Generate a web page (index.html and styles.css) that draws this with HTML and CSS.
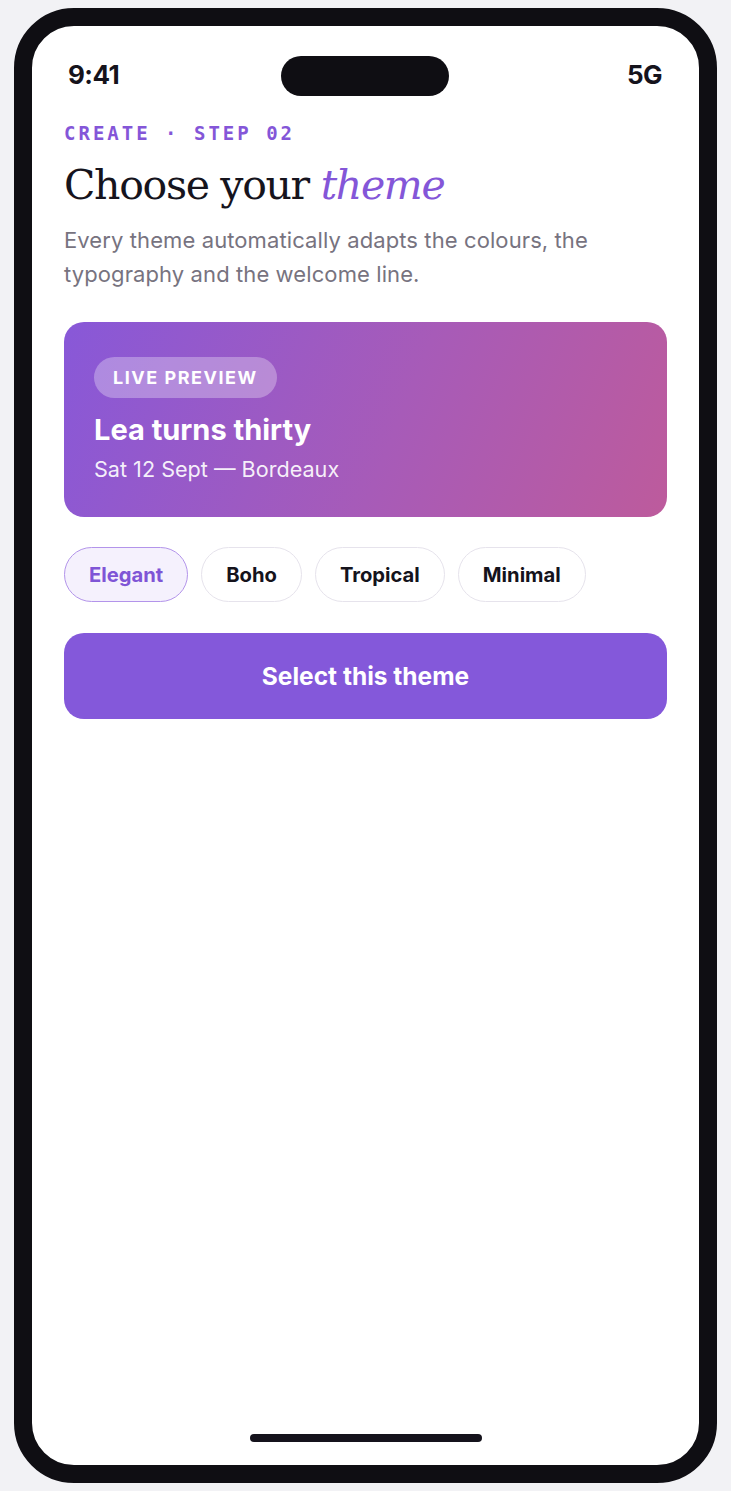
FILE: index.html
```html
<!DOCTYPE html>
<html lang="en">
<head>
<meta charset="utf-8">
<title>Choose your theme</title>
<link rel="stylesheet" href="styles.css">
</head>
<body>
<div class="phone">
  <div class="status">
    <span class="time">9:41</span>
    <span class="island"></span>
    <span class="net">5G</span>
  </div>
  <main class="content">
    <div class="eyebrow">CREATE · STEP 02</div>
    <h1 class="title">Choose your <em>theme</em></h1>
    <p class="lead">Every theme automatically adapts the colours, the typography and the welcome line.</p>
    <section class="preview">
      <span class="badge">LIVE PREVIEW</span>
      <h2 class="event">Lea turns thirty</h2>
      <p class="meta">Sat 12 Sept — Bordeaux</p>
    </section>
    <div class="chips">
      <button class="chip chip-active">Elegant</button>
      <button class="chip">Boho</button>
      <button class="chip">Tropical</button>
      <button class="chip">Minimal</button>
    </div>
    <button class="cta">Select this theme</button>
  </main>
  <div class="home"></div>
</div>
</body>
</html>
```
FILE: styles.css
```css
html, body {
  margin: 0;
  padding: 0;
}
body {
  background: #f2f2f5;
  padding: 8px 0;
  font-family: Inter, "Liberation Sans", sans-serif;
}
.phone {
  box-sizing: border-box;
  width: 703px;
  height: 1475px;
  margin: 0 auto;
  background: #ffffff;
  border: 18px solid #0f0e13;
  border-radius: 60px;
  display: flex;
  flex-direction: column;
  overflow: hidden;
}
.status {
  display: grid;
  grid-template-columns: 1fr 168px 1fr;
  align-items: start;
  padding: 30px 37px 0 36px;
  height: 40px;
}
.time, .net {
  font-size: 26px;
  line-height: 38px;
  font-weight: 700;
  color: #15131c;
  letter-spacing: -0.02em;
}
.net {
  justify-self: end;
}
.island {
  height: 40px;
  border-radius: 20px;
  background: #0f0e13;
}
.content {
  flex: 1;
  padding: 25px 32px 0;
}
.eyebrow {
  font-family: "DejaVu Sans Mono", "Liberation Mono", monospace;
  font-size: 19px;
  line-height: 24px;
  font-weight: 700;
  letter-spacing: 3px;
  color: #8456d8;
}
.title {
  margin: 16px 0 0;
  font-family: "DejaVu Serif", "Liberation Serif", serif;
  font-weight: 400;
  font-size: 41px;
  line-height: 48px;
  color: #16141d;
  letter-spacing: -0.032em;
}
.title em {
  color: #8456d8;
  font-style: italic;
}
.lead {
  margin: 14px 0 0;
  font-size: 22px;
  line-height: 34px;
  letter-spacing: 0.1px;
  color: #77737f;
}
.preview {
  margin-top: 31px;
  padding: 35px 30px 34px;
  border-radius: 20px;
  background: linear-gradient(112deg, #8858d8 0%, #a75bb8 55%, #bd5b9c 100%);
  color: #ffffff;
}
.badge {
  display: inline-block;
  height: 41px;
  line-height: 41px;
  padding: 0 19px;
  border-radius: 21px;
  background: rgba(255, 255, 255, 0.3);
  font-size: 18px;
  font-weight: 700;
  letter-spacing: 0.085em;
  vertical-align: top;
}
.event {
  margin: 14.5px 0 0;
  font-size: 29px;
  line-height: 34px;
  font-weight: 700;
}
.meta {
  margin: 8.3px 0 0;
  font-size: 21.6px;
  line-height: 28px;
  color: rgba(255, 255, 255, 0.92);
}
.chips {
  display: flex;
  gap: 13px;
  margin-top: 30px;
}
.chip {
  height: 55px;
  padding: 0 24px;
  border: 1px solid #e6e3ec;
  border-radius: 28px;
  background: #ffffff;
  color: #15131c;
  font-family: Inter, "Liberation Sans", sans-serif;
  font-size: 20.2px;
  font-weight: 700;
  line-height: 53px;
}
.chip-active {
  background: #f5f1fd;
  border-color: #b394ea;
  color: #7f55d6;
}
.cta {
  display: block;
  width: 100%;
  height: 86px;
  margin-top: 31px;
  border: 0;
  border-radius: 20px;
  background: #8458da;
  color: #ffffff;
  font-family: Inter, "Liberation Sans", sans-serif;
  font-size: 24.5px;
  font-weight: 700;
}
.home {
  align-self: center;
  width: 232px;
  height: 8px;
  border-radius: 4px;
  background: #15131c;
  margin-bottom: 23px;
}
```
